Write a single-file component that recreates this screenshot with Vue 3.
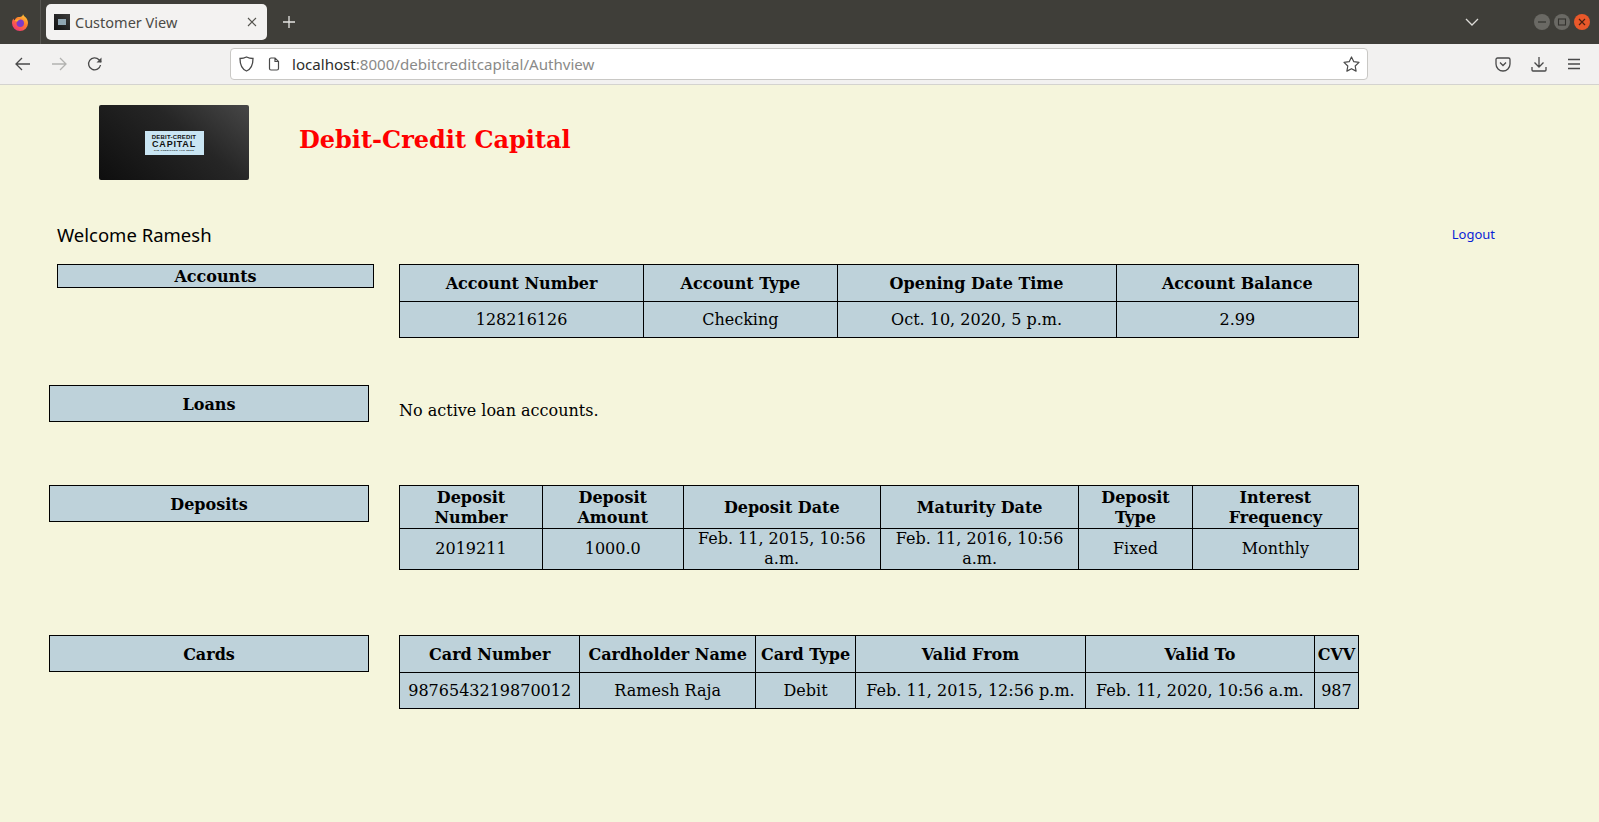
<script setup>
const accounts = [['128216126', 'Checking', 'Oct. 10, 2020, 5 p.m.', '2.99']]
const deposits = [['2019211', '1000.0', 'Feb. 11, 2015, 10:56 a.m.', 'Feb. 11, 2016, 10:56 a.m.', 'Fixed', 'Monthly']]
const cards = [['9876543219870012', 'Ramesh Raja', 'Debit', 'Feb. 11, 2015, 12:56 p.m.', 'Feb. 11, 2020, 10:56 a.m.', '987']]
</script>

<template>
  <div class="browser">
    <div class="titlebar">
      <div class="fx">
        <svg width="18" height="18" viewBox="0 0 18 18">
          <defs>
            <linearGradient id="fxg" x1="0.85" y1="0" x2="0.2" y2="1">
              <stop offset="0" stop-color="#ffd23a" />
              <stop offset="0.45" stop-color="#ff7a2c" />
              <stop offset="1" stop-color="#f0307a" />
            </linearGradient>
          </defs>
          <path d="M12 1c.5 1.500 1.200 2 2.500 3.300C16.200 6 17 8 17 10a8 8 0 0 1-16 0c0-1.800.5-3.200 1.500-4.500.2 1 .6 1.500 1.200 1.800C4.200 5.500 5.800 4 7.500 4 9.500 4 12 3.500 12 1z" fill="url(#fxg)" />
          <circle cx="9.300" cy="10.300" r="3.700" fill="#7b3bc9" />
          <path d="M3.700 7.300C5.500 5.800 8 6 9.500 6.800 8 7 7 7.500 6.500 8.500c-1 .2-2.200-.2-2.800-1.200z" fill="#ffb02e" />
        </svg>
      </div>
      <div class="tab">
        <span class="favicon"><i></i></span>
        <span class="tab-title">Customer View</span>
        <svg class="tab-x" width="10" height="10" viewBox="0 0 10 10"><path d="M1 1l8 8M9 1l-8 8" stroke="#55544f" stroke-width="1.100" /></svg>
      </div>
      <svg class="plus" width="14" height="14" viewBox="0 0 14 14"><path d="M7 1v12M1 7h12" stroke="#e6e5e2" stroke-width="1.300" /></svg>
      <div class="spacer"></div>
      <svg class="chevron" width="14" height="8" viewBox="0 0 14 8"><path d="M1 1l6 6 6-6" fill="none" stroke="#dddcd8" stroke-width="1.300" /></svg>
      <div class="winbtns">
        <span class="wb"><svg width="10" height="10" viewBox="0 0 10 10"><path d="M1 5h8" stroke="#33322e" stroke-width="1.200" /></svg></span>
        <span class="wb"><svg width="10" height="10" viewBox="0 0 10 10"><rect x="1.500" y="2" width="7" height="6" fill="none" stroke="#33322e" stroke-width="1.100" /></svg></span>
        <span class="wb close"><svg width="10" height="10" viewBox="0 0 10 10"><path d="M2 2l6 6M8 2l-6 6" stroke="#4a2010" stroke-width="1.200" /></svg></span>
      </div>
    </div>

    <div class="toolbar">
      <svg class="nav back" width="16" height="14" viewBox="0 0 16 14"><path d="M15 7H1.500M7 1L1 7l6 6" fill="none" stroke="#4a4a4a" stroke-width="1.300" /></svg>
      <svg class="nav fwd" width="16" height="14" viewBox="0 0 16 14"><path d="M1 7h13.500M9 1l6 6-6 6" fill="none" stroke="#b2b2b0" stroke-width="1.300" /></svg>
      <svg class="nav reload" width="16" height="16" viewBox="0 0 16 16"><path d="M13.500 9a6 6 0 1 1-1.500-5.200L14 6" fill="none" stroke="#4a4a4a" stroke-width="1.300" /><path d="M14.500 1.500V6.500H9.500z" fill="#4a4a4a" /></svg>
      <div class="urlbar">
        <svg width="15" height="16" viewBox="0 0 15 16"><path d="M7.500 1C5.500 2 3 2.500 1 2.500c0 6 1.500 10.500 6.500 12.500 5-2 6.500-6.500 6.500-12.500-2 0-4.500-.5-6.500-1.500z" fill="none" stroke="#4a4a4a" stroke-width="1.300" /></svg>
        <svg class="page-ic" width="12" height="14" viewBox="0 0 12 14"><path d="M1.500 2.500a1.500 1.500 0 0 1 1.500-1.500h4l3.500 3.500v7a1.500 1.500 0 0 1-1.500 1.500h-6a1.500 1.500 0 0 1-1.500-1.500zM7 1v3.500h3.500" fill="none" stroke="#4a4a4a" stroke-width="1.200" /></svg>
        <span class="url"><b>localhost</b>:8000/debitcreditcapital/Authview</span>
        <svg class="star" width="17" height="16" viewBox="0 0 17 16"><path d="M8.500 1l2.300 4.700 5.200.7-3.800 3.600.9 5.100-4.600-2.400-4.600 2.400.9-5.100L1 6.400l5.200-.7z" fill="none" stroke="#4a4a4a" stroke-width="1.200" stroke-linejoin="round" /></svg>
      </div>
      <div class="tools">
        <svg width="16" height="15" viewBox="0 0 16 15"><path d="M2.500 1h11A1.500 1.500 0 0 1 15 2.500V7a7 7 0 0 1-14 0V2.500A1.500 1.500 0 0 1 2.500 1z" fill="none" stroke="#4a4a4a" stroke-width="1.300" /><path d="M5 5.500l3 3 3-3" fill="none" stroke="#4a4a4a" stroke-width="1.300" /></svg>
        <svg width="16" height="16" viewBox="0 0 16 16"><path d="M8 1v10M3.500 6.500L8 11l4.500-4.500M1 11v3a1 1 0 0 0 1 1h12a1 1 0 0 0 1-1v-3" fill="none" stroke="#4a4a4a" stroke-width="1.300" /></svg>
        <svg width="14" height="12" viewBox="0 0 14 12"><path d="M1 1.500h12M1 6h12M1 10.500h12" stroke="#4a4a4a" stroke-width="1.300" /></svg>
      </div>
    </div>

    <div class="page">
      <header class="brand">
        <div class="logo">
          <div class="logo-inner">
            <span class="l1">DEBIT-CREDIT</span>
            <span class="l2">CAPITAL</span>
            <span class="l3">THE CREDITORS YOU NEED</span>
          </div>
        </div>
        <h1>Debit-Credit Capital</h1>
      </header>

      <div class="welcome">
        <span class="hello">Welcome Ramesh</span>
        <a class="logout" href="#">Logout</a>
      </div>

      <section class="row row-accounts">
        <div class="label label-small">Accounts</div>
        <table>
          <thead>
            <tr>
              <th>Account Number</th>
              <th>Account Type</th>
              <th>Opening Date Time</th>
              <th>Account Balance</th>
            </tr>
          </thead>
          <tbody>
            <tr v-for="a in accounts" :key="a[0]">
              <td v-for="c in a" :key="c">{{ c }}</td>
            </tr>
          </tbody>
        </table>
      </section>

      <section class="row row-loans">
        <div class="label">Loans</div>
        <p class="empty">No active loan accounts.</p>
      </section>

      <section class="row row-deposits">
        <div class="label">Deposits</div>
        <table>
          <thead>
            <tr>
              <th>Deposit Number</th>
              <th>Deposit Amount</th>
              <th>Deposit Date</th>
              <th>Maturity Date</th>
              <th>Deposit Type</th>
              <th>Interest Frequency</th>
            </tr>
          </thead>
          <tbody>
            <tr v-for="d in deposits" :key="d[0]">
              <td v-for="c in d" :key="c">{{ c }}</td>
            </tr>
          </tbody>
        </table>
      </section>

      <section class="row row-cards">
        <div class="label">Cards</div>
        <table>
          <thead>
            <tr>
              <th>Card Number</th>
              <th>Cardholder Name</th>
              <th>Card Type</th>
              <th>Valid From</th>
              <th>Valid To</th>
              <th>CVV</th>
            </tr>
          </thead>
          <tbody>
            <tr v-for="c in cards" :key="c[0]">
              <td v-for="v in c" :key="v">{{ v }}</td>
            </tr>
          </tbody>
        </table>
      </section>
    </div>
  </div>
</template>

<style>
html, body {
  margin: 0;
  background: #f5f5dc;
  overflow: hidden;
}
</style>

<style scoped>
.browser {
  height: 822px;
  display: flex;
  flex-direction: column;
  font-family: "Noto Sans", sans-serif;
}
.titlebar {
  height: 44px;
  flex: none;
  background: #3f3e39;
  display: flex;
  align-items: center;
}
.fx {
  width: 41px;
  height: 44px;
  box-sizing: border-box;
  border-right: 1px solid #575651;
  display: flex;
  align-items: center;
  justify-content: center;
  margin-right: 5px;
}
.tab {
  width: 221px;
  height: 36px;
  background: #f3f2f1;
  border-radius: 5px;
  display: flex;
  align-items: center;
  padding: 0 10px 0 8px;
  box-sizing: border-box;
}
.favicon {
  width: 16px;
  height: 16px;
  background: linear-gradient(45deg, #111, #3c3c3c);
  display: flex;
  align-items: center;
  justify-content: center;
}
.favicon i {
  width: 8px;
  height: 6px;
  background: #8fa6b2;
}
.tab-title {
  margin-left: 5px;
  font-size: 14.500px;
  color: #4b4a46;
  flex: 1;
}
.plus {
  margin-left: 15px;
}
.spacer {
  flex: 1;
}
.chevron {
  margin-right: 55px;
}
.winbtns {
  display: flex;
  gap: 4px;
  margin-right: 9px;
}
.wb {
  width: 16px;
  height: 16px;
  border-radius: 50%;
  background: #6a6964;
  display: flex;
  align-items: center;
  justify-content: center;
}
.wb.close {
  background: #e9582a;
}
.toolbar {
  height: 41px;
  flex: none;
  box-sizing: border-box;
  background: #f2f1f0;
  border-bottom: 1px solid #d4d3cf;
  display: flex;
  align-items: center;
}
.nav {
  flex: none;
}
.back {
  margin-left: 15px;
}
.fwd {
  margin-left: 20px;
}
.reload {
  margin-left: 20px;
}
.urlbar {
  margin-left: 127px;
  width: 1138px;
  height: 32px;
  box-sizing: border-box;
  background: #fff;
  border: 1px solid #c9c8c5;
  border-radius: 4px;
  display: flex;
  align-items: center;
  padding: 0 7px 0 8px;
}
.page-ic {
  margin-left: 14px;
}
.url {
  margin-left: 12px;
  font-size: 15.100px;
  color: #8a8a88;
  flex: 1;
}
.url b {
  font-weight: 400;
  color: #2e2e2c;
}
.tools {
  display: flex;
  align-items: center;
  gap: 20px;
  margin-left: 127px;
}
.page {
  flex: 1;
  background: #f5f5dc;
  font-family: "DejaVu Serif", serif;
  font-size: 16px;
  color: #000;
}
.brand {
  display: flex;
  align-items: center;
  padding: 20px 0 0 99px;
}
.logo {
  width: 150px;
  height: 75px;
  border-radius: 2px;
  background: linear-gradient(40deg, #0e0e0e, #262626 60%, #474747);
  display: flex;
  align-items: center;
  justify-content: center;
}
.logo-inner {
  width: 59px;
  height: 24px;
  background: #c9e5f3;
  display: flex;
  flex-direction: column;
  align-items: center;
  font-family: "Liberation Sans", sans-serif;
  font-weight: 700;
  color: #111;
  line-height: 1;
  padding-top: 3px;
  box-sizing: border-box;
}
.l1 {
  font-size: 6px;
  letter-spacing: 0.2px;
}
.l2 {
  font-size: 9px;
  letter-spacing: 0.8px;
}
.l3 {
  font-size: 2.500px;
  letter-spacing: 0.3px;
  margin-top: 1px;
  white-space: nowrap;
}
h1 {
  margin: 0 0 0 50px;
  font-size: 24px;
  font-weight: 700;
  color: #f00;
  position: relative;
  top: -3px;
}
.welcome {
  display: flex;
  align-items: center;
  justify-content: space-between;
  margin-top: 42px;
  padding: 0 104px 0 57px;
  font-family: "Noto Sans", sans-serif;
}
.hello {
  font-size: 18.500px;
}
.logout {
  font-size: 13px;
  color: #0a1fd6;
  text-decoration: none;
  margin-bottom: 2px;
}
.row {
  display: flex;
  align-items: flex-start;
  padding-left: 49px;
}
.row-accounts {
  margin-top: 17px;
  padding-left: 57px;
}
.row-loans {
  margin-top: 47px;
}
.row-deposits {
  margin-top: 63px;
}
.row-cards {
  margin-top: 65px;
}
.label {
  width: 320px;
  height: 37px;
  flex: none;
  box-sizing: border-box;
  border: 1px solid #000;
  padding-top: 2px;
  background: #bed2da;
  font-weight: 700;
  display: flex;
  align-items: center;
  justify-content: center;
  margin-right: 30px;
}
.label-small {
  width: 317px;
  height: 24px;
  padding-top: 0;
  margin-right: 25px;
  align-items: flex-start;
  line-height: 24px;
}
table {
  width: 960px;
  border-collapse: collapse;
  background: #bed2da;
  text-align: center;
}
th, td {
  border: 1px solid #000;
  line-height: 20px;
}
th {
  padding: 2px 1px 0;
  height: 34px;
}
td {
  padding: 0 1px;
  height: 35px;
}
.empty {
  margin: 16px 0 0;
  line-height: 19px;
}
</style>
